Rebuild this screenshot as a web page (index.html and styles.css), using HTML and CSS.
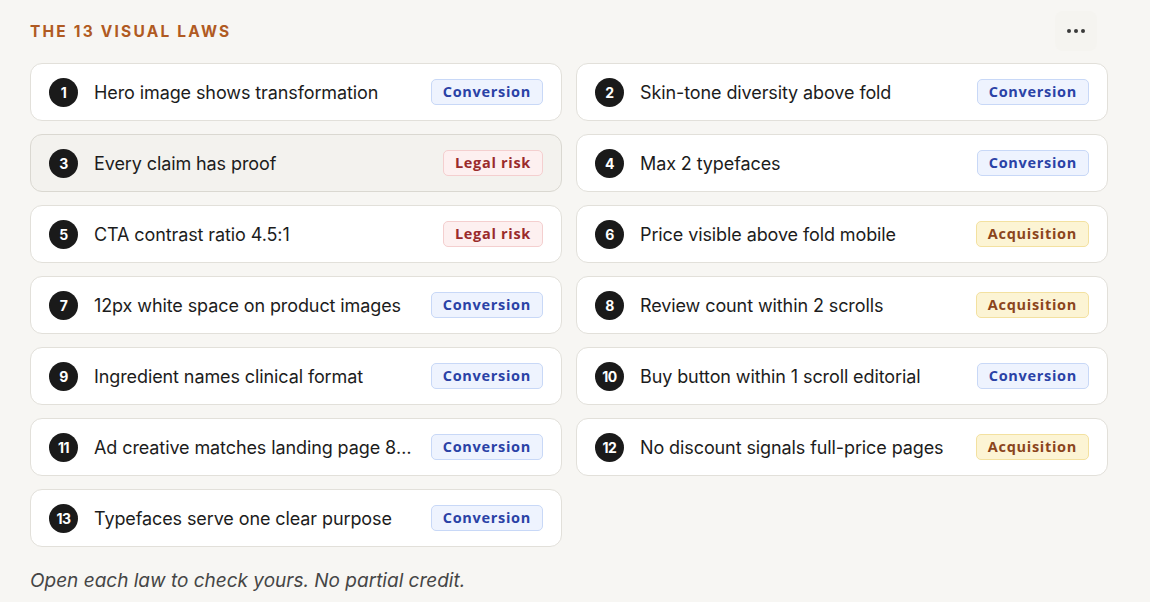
FILE: index.html
```html
<!DOCTYPE html>
<html lang="en">
<head>
    <meta charset="UTF-8">
    <meta name="viewport" content="width=device-width, initial-scale=1.0">
    <title>The 13 Visual Laws</title>
    <link rel="stylesheet" href="styles.css">
</head>
<body>
    <div class="panel">
        <div class="panel-head">
            <h2 class="eyebrow">The 13 Visual Laws</h2>
            <button class="more" aria-label="More options">
                <svg width="20" height="6" viewBox="0 0 20 6"><circle cx="3" cy="3" r="2" fill="#3a3a3a"/><circle cx="10" cy="3" r="2" fill="#3a3a3a"/><circle cx="17" cy="3" r="2" fill="#3a3a3a"/></svg>
            </button>
        </div>

        <div class="laws">
            <div class="law"><span class="num">1</span><span class="name">Hero image shows transformation</span><span class="tag conv">Conversion</span></div>
            <div class="law"><span class="num">2</span><span class="name">Skin-tone diversity above fold</span><span class="tag conv">Conversion</span></div>
            <div class="law active"><span class="num">3</span><span class="name">Every claim has proof</span><span class="tag legal">Legal risk</span></div>
            <div class="law"><span class="num">4</span><span class="name">Max 2 typefaces</span><span class="tag conv">Conversion</span></div>
            <div class="law"><span class="num">5</span><span class="name">CTA contrast ratio 4.5:1</span><span class="tag legal">Legal risk</span></div>
            <div class="law"><span class="num">6</span><span class="name">Price visible above fold mobile</span><span class="tag acq">Acquisition</span></div>
            <div class="law"><span class="num">7</span><span class="name">12px white space on product images</span><span class="tag conv">Conversion</span></div>
            <div class="law"><span class="num">8</span><span class="name">Review count within 2 scrolls</span><span class="tag acq">Acquisition</span></div>
            <div class="law"><span class="num">9</span><span class="name">Ingredient names clinical format</span><span class="tag conv">Conversion</span></div>
            <div class="law"><span class="num">10</span><span class="name">Buy button within 1 scroll editorial</span><span class="tag conv">Conversion</span></div>
            <div class="law"><span class="num">11</span><span class="name">Ad creative matches landing page 80% visually</span><span class="tag conv">Conversion</span></div>
            <div class="law"><span class="num">12</span><span class="name">No discount signals full-price pages</span><span class="tag acq">Acquisition</span></div>
            <div class="law"><span class="num">13</span><span class="name">Typefaces serve one clear purpose</span><span class="tag conv">Conversion</span></div>
        </div>

        <p class="note">Open each law to check yours. No partial credit.</p>
    </div>
</body>
</html>
```

FILE: styles.css
```css
body {
    margin: 0;
    background-color: #f7f6f3;
    font-family: Inter, "Noto Sans", sans-serif;
    color: #1c1c1c;
}
.panel {
    padding: 10px 42px 0 30px;
}
.panel-head {
    display: flex;
    align-items: center;
    justify-content: space-between;
    height: 42px;
    margin-bottom: 11px;
}
.eyebrow {
    margin: 0;
    font-size: 15.5px;
    font-weight: 700;
    letter-spacing: 2.2px;
    text-transform: uppercase;
    color: #b05a22;
}
.more {
    width: 42px;
    height: 40px;
    margin-right: 11px;
    border: none;
    border-radius: 8px;
    background-color: #f5f4f0;
    display: flex;
    align-items: center;
    justify-content: center;
    cursor: pointer;
}
.laws {
    display: grid;
    grid-template-columns: minmax(0, 1fr) minmax(0, 1fr);
    column-gap: 14px;
    row-gap: 13px;
}
.law {
    display: flex;
    align-items: center;
    min-width: 0;
    height: 58px;
    box-sizing: border-box;
    padding: 0 18px 0 18px;
    background-color: #fff;
    border: 1px solid #e2e0da;
    border-radius: 12px;
}
.law.active {
    background-color: #f3f2ee;
    border-color: #dad8d1;
}
.num {
    flex: none;
    width: 29px;
    height: 29px;
    border-radius: 50%;
    background-color: #1a1a1a;
    color: #fff;
    font-size: 14px;
    font-weight: 700;
    letter-spacing: -0.5px;
    display: flex;
    align-items: center;
    justify-content: center;
    margin-right: 16px;
}
.name {
    flex: 1;
    min-width: 0;
    font-size: 18px;
    letter-spacing: -0.1px;
    white-space: nowrap;
    overflow: hidden;
    text-overflow: ellipsis;
    padding-right: 16px;
}
.tag {
    flex: none;
    font-family: "Open Sans", sans-serif;
    font-size: 14.5px;
    font-weight: 700;
    letter-spacing: 0.7px;
    padding: 2px 11px 3px;
    border: 1px solid;
    border-radius: 5px;
}
.conv {
    background-color: #eef3fe;
    border-color: #c8d8f7;
    color: #2a42a6;
}
.legal {
    background-color: #fdf0f0;
    border-color: #f4cfcf;
    color: #9a2b2b;
}
.acq {
    background-color: #fcf4d4;
    border-color: #f3e1a0;
    color: #8b451c;
}
.note {
    margin: 22px 0 0;
    font-size: 19px;
    font-style: italic;
    color: #454545;
}
```
